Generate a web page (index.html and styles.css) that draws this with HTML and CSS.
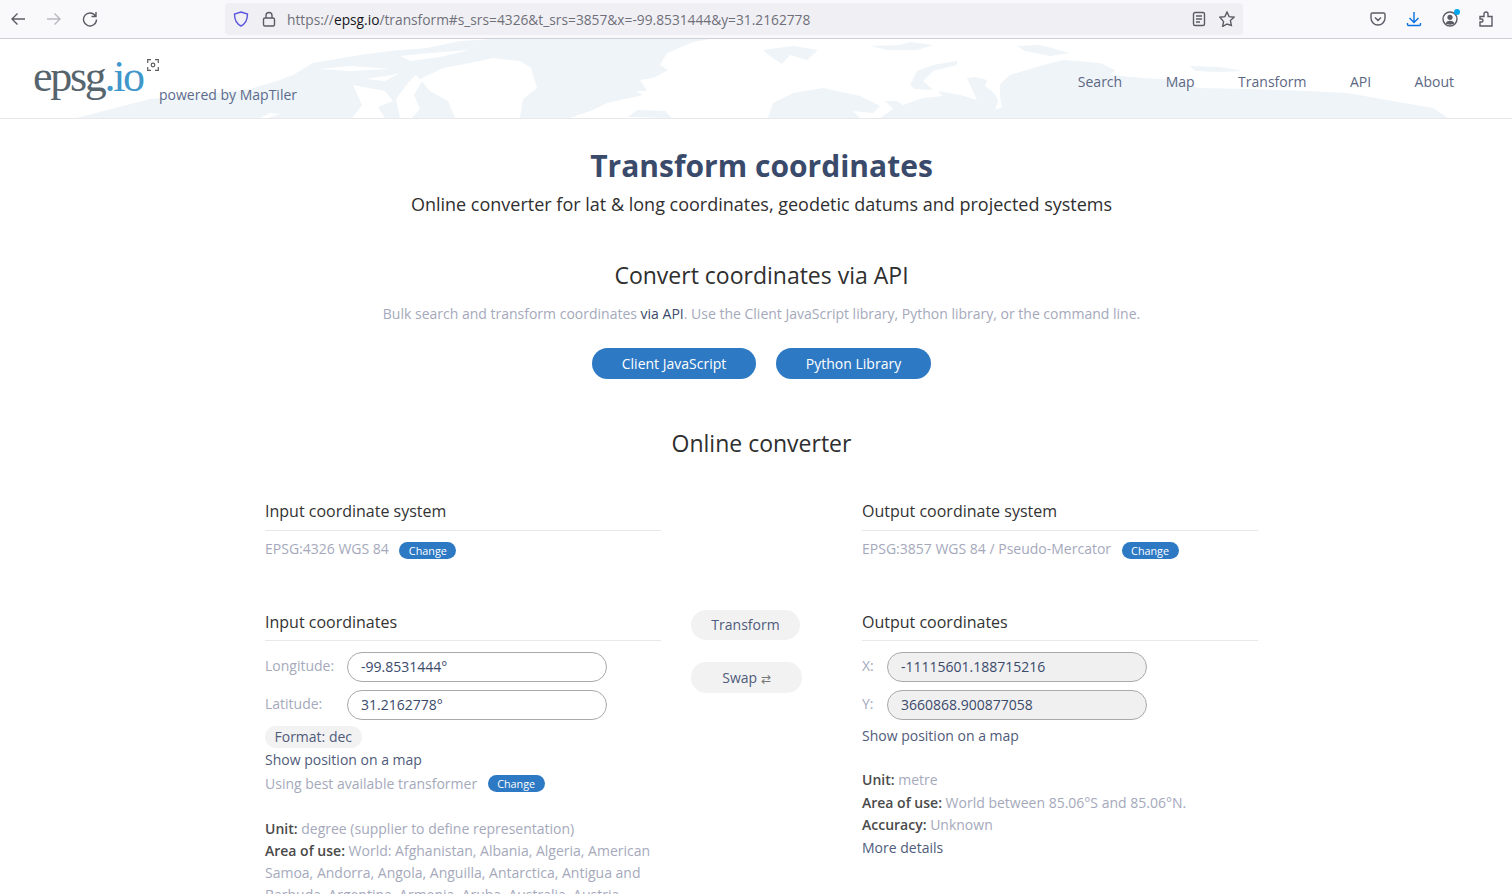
FILE: index.html
```html
<!DOCTYPE html>
<html lang="en">
    <head>
        <meta charset="UTF-8">
        <title>Transform coordinates</title>
        <link rel="stylesheet" href="styles.css">
    </head>
    <body>
        <!-- browser toolbar -->
        <div class="toolbar">
            <div class="nav-icons">
                <svg class="ico" viewBox="0 0 16 16"><path d="M15 8H2M7.5 2.5 2 8l5.500 5.500"/></svg>
                <svg class="ico ico-off" viewBox="0 0 16 16"><path d="M1 8h13M8.500 2.500 14 8l-5.500 5.500"/></svg>
                <svg class="ico" viewBox="0 0 16 16"><path d="M13.500 5A6.500 6.500 0 1 0 14.500 8.500M14 1v4.500H9.500"/></svg>
            </div>
            <div class="urlbar">
                <svg class="ico ico-shield" viewBox="0 0 16 16"><path d="M8 1 14.500 3c0 6-1.500 9.500-6.500 12C3 12.500 1.500 9 1.500 3Z"/></svg>
                <svg class="ico ico-lock" viewBox="0 0 16 16"><rect x="2.500" y="7" width="11" height="8" rx="1.500"/><path d="M5 7V4.500a3 3 0 0 1 6 0V7"/></svg>
                <span class="url">https://<b>epsg.io</b>/transform#s_srs=4326&amp;t_srs=3857&amp;x=-99.8531444&amp;y=31.2162778</span>
                <svg class="ico ico-reader" viewBox="0 0 16 16"><rect x="2.500" y="1.500" width="11" height="13" rx="1.500"/><path d="M5 5h6M5 8h6M5 11h4"/></svg>
                <svg class="ico ico-star" viewBox="0 0 16 16"><path d="M8 1l2.100 4.600 5 .6-3.700 3.400 1 4.900L8 13l-4.400 2.500 1-4.900L.9 6.200l5-.6Z"/></svg>
            </div>
            <div class="tool-icons">
                <svg class="ico" viewBox="0 0 16 16"><path d="M2.500 2h11A1.500 1.500 0 0 1 15 3.500V7a7 7 0 0 1-14 0V3.500A1.500 1.500 0 0 1 2.500 2ZM5 6.500l3 3 3-3"/></svg>
                <svg class="ico ico-blue" viewBox="0 0 16 16"><path d="M8 1v10M3.500 7 8 11.500 12.500 7M1.500 12v1.500a1 1 0 0 0 1 1h11a1 1 0 0 0 1-1V12"/></svg>
                <div class="account">
                    <svg class="ico" viewBox="0 0 16 16"><circle cx="8" cy="8" r="7"/><circle class="solid" cx="8" cy="6.300" r="2.600"/><path class="solid" d="M3.500 12.500c1-2 2.500-2.700 4.500-2.700s3.500.7 4.500 2.700C11 14 5 14 3.500 12.500Z"/></svg>
                    <span class="dot"></span>
                </div>
                <svg class="ico" viewBox="0 0 16 16"><path d="M2 5.500h4V3a2 2 0 0 1 4 0v2.500h4v9.500H2v-4h1.500a1.500 1.500 0 0 0 0-3H2Z"/></svg>
            </div>
        </div>

        <!-- site header -->
        <header class="site-header">
            <svg class="map-bg" viewBox="0 0 1512 79">
                <path d="M77 79 107 71 150 60 200 56 250 50 277 42 293 36 313 24 360 16 390 12 427 9 460 2 493 0H710L693 3 667 14 660 26 668 31 653 39 640 41 647 52 635 52 643 56 607 64 593 71 570 79Z"/>
                <path class="hole" d="M420 40 443 29 470 24 493 19 520 22 531 29 537 49 523 60 520 79 455 79 448 62 430 52Z"/>
                <path class="hole" d="M353 46 385 52 393 62 378 68 385 79 352 79 362 66Z"/>
                <path class="hole" d="M400 79 396 60 408 44 416 36 422 42 414 56 420 70 412 79Z"/>
                <path class="hole" d="M320 30 350 27 392 30 350 32Z"/>
                <path class="hole" d="M365 40 392 36 400 34 385 42Z"/>
                <path class="hole" d="M400 17 430 14 470 11 440 18 410 22Z"/>
                <path class="hole" d="M260 79 270 74 280 75 268 79Z"/>
                <path d="M628 78 637 71 665 72 672 79Z"/>
                <path d="M763 11 793 7 818 11 807 21 790 16 782 25 770 17Z"/>
                <path d="M870 7 900 6 910 3 933 6 917 11 887 11Z"/>
                <path d="M910 46 917 32 933 26 957 22 957 26 933 32 923 42 933 51 915 50Z"/>
                <path d="M768 79 773 64 793 54 823 49 860 57 880 67 873 74 853 72 860 79Z"/>
                <path d="M880 79 893 70 885 62 897 62 903 66 923 59 943 57 938 52 960 56 977 61 972 50 967 39 975 38 987 41 985 47 995 55 998 62 995 71 1002 68 1000 58 1000 45 1010 36 1020 33 1040 27 1063 21 1100 24 1115 31 1110 36 1143 39 1177 41 1197 49 1250 50 1307 52 1347 54 1387 61 1433 69 1448 79Z"/>
                <path d="M1017 7 1040 6 1070 14 1050 17 1025 12Z"/>
                <path d="M1190 27 1220 28 1243 32 1220 33 1195 32Z"/>
            </svg>
            <a class="logo">
                <span class="logo-text">epsg<span class="logo-io">.io</span></span>
                <svg class="logo-mark" viewBox="0 0 12 12"><path d="M.7 4V.7H4M8 .7h3.300V4M11.300 8v3.300H8M4 11.300H.7V8"/><circle cx="6" cy="6" r="1.800"/></svg>
            </a>
            <span class="powered">powered by MapTiler</span>
            <nav class="site-nav">
                <a>Search</a>
                <a>Map</a>
                <a>Transform</a>
                <a>API</a>
                <a>About</a>
            </nav>
        </header>

        <main>
            <h1>Transform coordinates</h1>
            <p class="lead">Online converter for lat &amp; long coordinates, geodetic datums and projected systems</p>

            <h2 class="api-title">Convert coordinates via API</h2>
            <p class="api-text">Bulk search and transform coordinates <a>via API</a>. Use the Client JavaScript library, Python library, or the command line.</p>
            <div class="api-buttons">
                <a class="btn-blue">Client JavaScript</a>
                <a class="btn-blue btn-python">Python Library</a>
            </div>

            <h2 class="converter-title">Online converter</h2>

            <div class="converter">
                <section class="col">
                    <h3>Input coordinate system</h3>
                    <p class="crs"><span>EPSG:4326 WGS 84</span><a class="badge">Change</a></p>

                    <h3 class="coords-head">Input coordinates</h3>
                    <div class="field">
                        <label class="label-wide">Longitude:</label>
                        <div class="input">-99.8531444°</div>
                    </div>
                    <div class="field">
                        <label class="label-wide">Latitude:</label>
                        <div class="input">31.2162778°</div>
                    </div>
                    <a class="format">Format: dec</a>
                    <a class="link map-link">Show position on a map</a>
                    <p class="transformer"><span>Using best available transformer</span><a class="badge">Change</a></p>
                    <dl class="meta meta-input">
                        <div><b>Unit:</b> degree (supplier to define representation)</div>
                        <div><b>Area of use:</b> World: Afghanistan, Albania, Algeria, American Samoa, Andorra, Angola, Anguilla, Antarctica, Antigua and Barbuda, Argentina, Armenia, Aruba, Australia, Austria</div>
                    </dl>
                </section>

                <div class="middle">
                    <a class="btn-grey btn-transform">Transform</a>
                    <a class="btn-grey btn-swap">Swap <span class="swap-arrow">⇄</span></a>
                </div>

                <section class="col">
                    <h3>Output coordinate system</h3>
                    <p class="crs"><span>EPSG:3857 WGS 84 / Pseudo-Mercator</span><a class="badge">Change</a></p>

                    <h3 class="coords-head">Output coordinates</h3>
                    <div class="field">
                        <label class="label-narrow">X:</label>
                        <div class="input input-off">-11115601.188715216</div>
                    </div>
                    <div class="field">
                        <label class="label-narrow">Y:</label>
                        <div class="input input-off">3660868.900877058</div>
                    </div>
                    <a class="link map-link-out">Show position on a map</a>
                    <dl class="meta meta-output">
                        <div><b>Unit:</b> metre</div>
                        <div><b>Area of use:</b> World between 85.06°S and 85.06°N.</div>
                        <div><b>Accuracy:</b> Unknown</div>
                        <div><a class="link">More details</a></div>
                    </dl>
                </section>
            </div>
        </main>
    </body>
</html>
```

FILE: styles.css
```css
/* Global Styles */
html, body {
    height: 894px;
    overflow: hidden;
}

body {
    font-family: "Open Sans", Arial, sans-serif;
    font-size: 14px;
    color: #a5a9bb;
    background: white;
    margin: 0;
}

p, h1, h2, h3, dl {
    margin: 0;
    font-weight: normal;
}

/* Browser toolbar */
.toolbar {
    height: 38px;
    display: flex;
    align-items: center;
    background: #f9f9fb;
    border-bottom: 1px solid #cfcfd8;
    position: relative;
}

.ico {
    width: 16px;
    height: 16px;
    fill: none;
    stroke: #5b5b66;
    stroke-width: 1.4;
    display: block;
}

.ico-off {
    stroke: #b8b8bf;
}

.nav-icons {
    display: flex;
    gap: 20px;
    margin-left: 10px;
    width: 215px;
    flex: none;
}

.urlbar {
    width: 1018px;
    height: 32px;
    background: #f0f0f4;
    border-radius: 4px;
    display: flex;
    align-items: center;
    flex: none;
}

.ico-shield {
    stroke: #5a55e0;
    margin-left: 8px;
}

.ico-lock {
    margin-left: 12px;
}

.url {
    font-size: 13.750px;
    color: #6f6f7a;
    margin-left: 10px;
    flex: 1;
}

.url b {
    font-weight: normal;
    color: #15141a;
}

.ico-star {
    margin: 0 8px 0 12px;
}

.tool-icons {
    display: flex;
    gap: 20px;
    margin-left: 127px;
}

.ico-blue {
    stroke: #0a6fe0;
}

.account {
    position: relative;
}

.solid {
    fill: #5b5b66;
    stroke: none;
}

.dot {
    position: absolute;
    width: 6px;
    height: 6px;
    border-radius: 50%;
    background: #00a5f0;
    top: -2px;
    right: -2px;
}

/* Site header */
.site-header {
    height: 79px;
    border-bottom: 1px solid #e8e8ea;
    position: relative;
    display: flex;
    overflow: hidden;
}

.map-bg {
    position: absolute;
    inset: 0;
    width: 1512px;
    height: 79px;
    fill: #eef4f8;
}

.map-bg .hole {
    fill: white;
}

.logo {
    position: relative;
    margin: 13px 0 0 33px;
    width: 126px;
    flex: none;
    height: 50px;
}

.logo-text {
    font-family: "Liberation Serif", serif;
    font-size: 44px;
    line-height: 50px;
    letter-spacing: -2.300px;
    color: #56646d;
}

.logo-io {
    color: #3f97cb;
}

.logo-mark {
    position: absolute;
    left: 114px;
    top: 7px;
    width: 12px;
    height: 12px;
    fill: none;
    stroke: #5d5d5d;
    stroke-width: 1.2;
}

.powered {
    position: relative;
    color: #5c6b8c;
    margin-top: 46px;
    line-height: 20px;
    height: 20px;
}

.site-nav {
    position: relative;
    margin-left: auto;
    margin-right: 58px;
    margin-top: 33px;
    display: flex;
    gap: 43.500px;
    color: #5c6784;
    line-height: 20px;
}

/* Headings */
main {
    width: 993px;
    margin-left: 265px;
}

h1 {
    width: 993px;
    text-align: center;
    font-size: 30px;
    font-weight: bold;
    line-height: 40px;
    margin-top: 27px;
    color: #3a4a6b;
}

.lead {
    text-align: center;
    font-size: 18px;
    line-height: 26px;
    margin-top: 5px;
    color: #2f2f2f;
}

.api-title, .converter-title {
    text-align: center;
    font-size: 23px;
    line-height: 32px;
    color: #2f2f2f;
}

.api-title {
    margin-top: 42px;
}

.api-text {
    text-align: center;
    line-height: 20px;
    margin-top: 13px;
}

.api-text a {
    color: #3a4a6b;
}

/* API buttons */
.api-buttons {
    display: flex;
    justify-content: center;
    gap: 20px;
    margin-top: 24px;
}

.btn-blue {
    width: 164px;
    height: 31px;
    line-height: 31px;
    text-align: center;
    background: #2d79c4;
    color: white;
    border-radius: 16px;
}

.btn-python {
    width: 155px;
}

.converter-title {
    margin-top: 48px;
}

/* Converter columns */
.converter {
    display: grid;
    grid-template-columns: 396px 201px 396px;
    margin-top: 41px;
}

h3 {
    font-size: 16px;
    line-height: 22px;
    color: #333;
    padding-bottom: 8px;
    border-bottom: 1px solid #e8e8ea;
}

.crs {
    display: flex;
    align-items: flex-start;
    line-height: 20px;
    margin-top: 8px;
}

.badge {
    background: #2d79c4;
    color: white;
    font-size: 10.800px;
    line-height: 17px;
    height: 17px;
    width: 57px;
    text-align: center;
    border-radius: 9px;
    margin: 3px 0 0 10.500px;
    flex: none;
}

h3.coords-head {
    margin-top: 52px;
    padding-bottom: 7px;
}

.field {
    display: flex;
    align-items: center;
    margin-top: 11px;
}

.field + .field {
    margin-top: 8px;
}

.field label {
    flex: none;
    margin-top: -4px;
}

.label-wide {
    width: 82px;
}

.label-narrow {
    width: 25px;
}

.input {
    width: 260px;
    height: 30px;
    box-sizing: border-box;
    border: 1px solid #a9a9a9;
    border-radius: 15px;
    padding-left: 13px;
    line-height: 28px;
    color: #3a4a6b;
}

.input-off {
    background: #f0f0f0;
}

.format {
    display: inline-block;
    margin-top: 6px;
    padding: 0 9.500px;
    height: 22px;
    line-height: 22px;
    background: #f2f2f2;
    border-radius: 11px;
    color: #4f5b7a;
}

.link {
    color: #4f5b7a;
}

.map-link {
    display: block;
    line-height: 20px;
    margin-top: 2px;
}

.map-link-out {
    display: block;
    line-height: 20px;
    margin-top: 6px;
}

.transformer {
    display: flex;
    align-items: flex-start;
    line-height: 20px;
    margin-top: 4px;
}

.transformer .badge {
    margin-top: 1px;
}

.meta div {
    line-height: 22px;
}

.meta b {
    font-weight: 600;
    color: #4a4a4a;
}

.meta-input {
    margin-top: 24px;
}

.meta-output {
    margin-top: 23px;
}

.meta-output div {
    line-height: 22.700px;
}

/* Middle buttons */
.middle {
    display: flex;
    flex-direction: column;
    align-items: flex-start;
    padding: 110px 0 0 30px;
}

.btn-grey {
    height: 30px;
    line-height: 30px;
    width: 109px;
    text-align: center;
    background: #f2f2f2;
    border-radius: 15px;
    color: #4f5b7a;
}

.btn-swap {
    width: 111px;
    height: 31px;
    line-height: 31px;
    margin-top: 22px;
}

.swap-arrow {
    font-size: 12px;
    color: #777;
}
```
